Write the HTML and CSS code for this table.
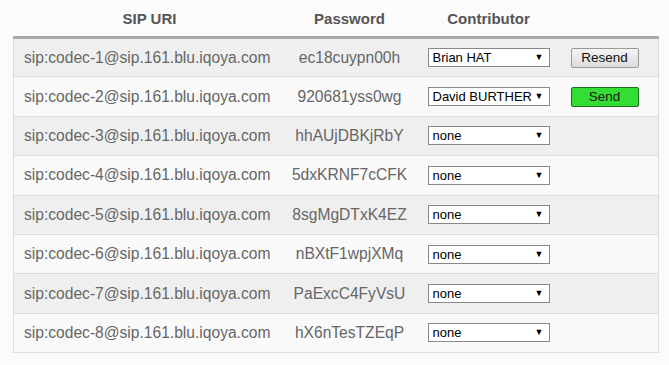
FILE: index.html
```html
<!DOCTYPE html>
<html>
<head>
<meta charset="utf-8">
<title>Codecs</title>
<link rel="stylesheet" href="styles.css">
</head>
<body>

<table class="codecs">
	<thead>
		<tr>
			<th class="uri">SIP URI</th>
			<th class="pass">Password</th>
			<th class="who">Contributor</th>
			<th class="act"></th>
		</tr>
	</thead>
	<tbody>
		<tr>
			<td class="uri">sip:codec-1@sip.161.blu.iqoya.com</td>
			<td class="pass">ec18cuypn00h</td>
			<td class="who"><div class="pick"><select><option>Brian HAT</option></select></div></td>
			<td class="act"><button class="btn">Resend</button></td>
		</tr>
		<tr>
			<td class="uri">sip:codec-2@sip.161.blu.iqoya.com</td>
			<td class="pass">920681yss0wg</td>
			<td class="who"><div class="pick"><select><option>David BURTHER</option></select></div></td>
			<td class="act"><button class="btn send">Send</button></td>
		</tr>
		<tr>
			<td class="uri">sip:codec-3@sip.161.blu.iqoya.com</td>
			<td class="pass">hhAUjDBKjRbY</td>
			<td class="who"><div class="pick"><select><option>none</option></select></div></td>
			<td class="act"></td>
		</tr>
		<tr>
			<td class="uri">sip:codec-4@sip.161.blu.iqoya.com</td>
			<td class="pass">5dxKRNF7cCFK</td>
			<td class="who"><div class="pick"><select><option>none</option></select></div></td>
			<td class="act"></td>
		</tr>
		<tr>
			<td class="uri">sip:codec-5@sip.161.blu.iqoya.com</td>
			<td class="pass">8sgMgDTxK4EZ</td>
			<td class="who"><div class="pick"><select><option>none</option></select></div></td>
			<td class="act"></td>
		</tr>
		<tr>
			<td class="uri">sip:codec-6@sip.161.blu.iqoya.com</td>
			<td class="pass">nBXtF1wpjXMq</td>
			<td class="who"><div class="pick"><select><option>none</option></select></div></td>
			<td class="act"></td>
		</tr>
		<tr>
			<td class="uri">sip:codec-7@sip.161.blu.iqoya.com</td>
			<td class="pass">PaExcC4FyVsU</td>
			<td class="who"><div class="pick"><select><option>none</option></select></div></td>
			<td class="act"></td>
		</tr>
		<tr>
			<td class="uri">sip:codec-8@sip.161.blu.iqoya.com</td>
			<td class="pass">hX6nTesTZEqP</td>
			<td class="who"><div class="pick"><select><option>none</option></select></div></td>
			<td class="act"></td>
		</tr>
	</tbody>
</table>

</body>
</html>
```
FILE: styles.css
```css
body {
	margin: 0px;
	padding: 0px 11px 0px 13px;
	background-color: #fbfbfb;
	font-family: "Liberation Sans", Arial, sans-serif;
}
.codecs {
	width: 645px;
	border-collapse: collapse;
	table-layout: fixed;
}
.codecs th {
	height: 36px;
	padding: 0px;
	font-size: 15px;
	font-weight: bold;
	color: #555;
	text-align: center;
	border-bottom: 3px solid #aaa;
}
.codecs tbody tr {
	height: 39.4px;
	background-color: #f9f9f9;
}
.codecs tbody tr:nth-child(odd) {
	background-color: #efefef;
}
.codecs td {
	padding: 0px;
	font-size: 15.6px;
	line-height: 18px;
	color: #666;
	border-bottom: 1px solid #ddd;
}
.codecs tbody td:first-child {
	border-left: 1px solid #ddd;
}
.codecs tbody td:last-child {
	border-right: 1px solid #ddd;
}
.uri {
	width: 272px;
}
td.uri {
	padding-left: 10px;
}
.pass {
	width: 128px;
	text-align: center;
}
.who {
	width: 150px;
}
td.who {
	padding-left: 14px;
}
.act {
	width: 95px;
}
td.act {
	padding-left: 7px;
}

/* select with the old windows look */
.pick {
	position: relative;
	width: 122px;
	height: 19px;
}
.pick select {
	-webkit-appearance: none;
	appearance: none;
	display: block;
	width: 122px;
	height: 19px;
	margin: 0px;
	padding: 0px 0px 0px 4px;
	border: 1px solid #888;
	border-radius: 0px;
	background-color: #fff;
	font-family: "Liberation Sans", Arial, sans-serif;
	font-size: 13px;
	color: #000;
}
.pick::after {
	content: "\25BC";
	position: absolute;
	right: 6px;
	top: 4px;
	font-size: 9px;
	line-height: 10px;
	color: #000;
	pointer-events: none;
}

.btn {
	display: block;
	width: 68px;
	height: 20px;
	margin: 0px;
	padding: 0px;
	border: 1px solid #999;
	border-radius: 2px;
	background: linear-gradient(#f4f4f4, #dcdcdc);
	font-family: "Liberation Sans", Arial, sans-serif;
	font-size: 13.5px;
	color: #111;
}
.btn.send {
	border: 1px solid #1d6e1d;
	background: #33dd33;
	color: #1a1a1a;
}
```
